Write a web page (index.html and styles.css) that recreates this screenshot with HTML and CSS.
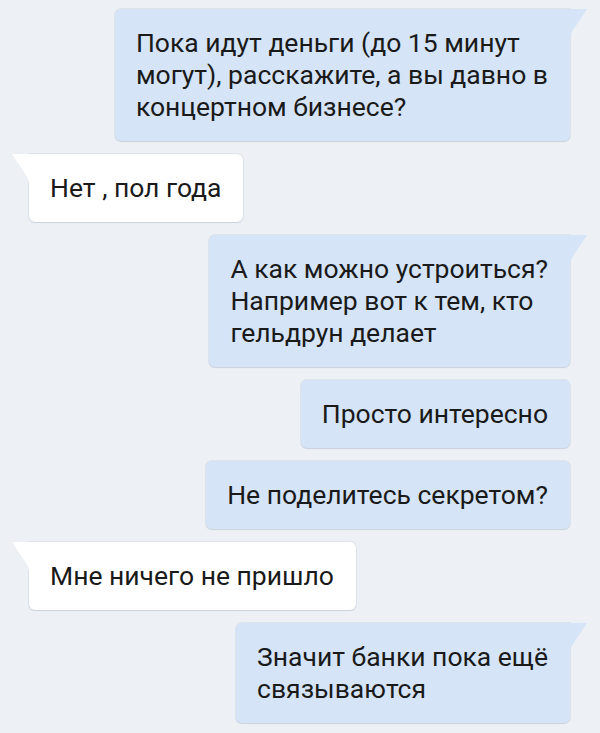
FILE: index.html
```html
<!DOCTYPE html>
<html lang="ru">
<head>
    <meta charset="UTF-8">
    <meta name="viewport" content="width=device-width, initial-scale=1.0">
    <title>Переписка</title>
    <link rel="stylesheet" href="styles.css">
</head>
<body>

    <!-- Лента сообщений -->
    <div class="chat">
        <div class="msg out">Пока идут деньги (до 15 минут<br>могут), расскажите, а вы давно в<br>концертном бизнесе?</div>
        <div class="msg in">Нет , пол года</div>
        <div class="msg out">А как можно устроиться?<br>Например вот к тем, кто<br>гельдрун делает</div>
        <div class="msg out plain">Просто интересно</div>
        <div class="msg out plain">Не поделитесь секретом?</div>
        <div class="msg in">Мне ничего не пришло</div>
        <div class="msg out">Значит банки пока ещё<br>связываются</div>
    </div>

</body>
</html>
```

FILE: styles.css
```css
body {
    margin: 0;
    padding: 0;
    background: #edf0f5;
    font-family: Roboto, 'Noto Sans', sans-serif;
    color: #1a1a1a;
}

.chat {
    display: flex;
    flex-direction: column;
    gap: 13px;
    padding: 9px 30px 10px 29px;
}

.msg {
    position: relative;
    font-size: 26.5px;
    line-height: 32px;
    padding: 18px 22px 18px 21px;
    border-radius: 6px;
    white-space: nowrap;
    box-shadow: 0 0 0 1px rgba(60, 90, 130, 0.08), 0 1px 1px rgba(60, 90, 130, 0.12);
}

/* исходящие */
.msg.out {
    align-self: flex-end;
    background-color: #d5e4f7;
    border-top-right-radius: 0;
}

.msg.out::after {
    content: '';
    position: absolute;
    top: 0;
    right: -17px;
    width: 17px;
    height: 30px;
    background-color: #d5e4f7;
    clip-path: path('M0 0 H17 L3 21 Q0 25 0 30 Z');
}

.msg.out.plain {
    border-top-right-radius: 6px;
}

.msg.out.plain::after {
    display: none;
}

/* входящие */
.msg.in {
    align-self: flex-start;
    background-color: #fff;
    border-top-left-radius: 0;
}

.msg.in::after {
    content: '';
    position: absolute;
    top: 0;
    left: -17px;
    width: 17px;
    height: 30px;
    background-color: #fff;
    clip-path: path('M17 0 H0 L14 21 Q17 25 17 30 Z');
}
```
